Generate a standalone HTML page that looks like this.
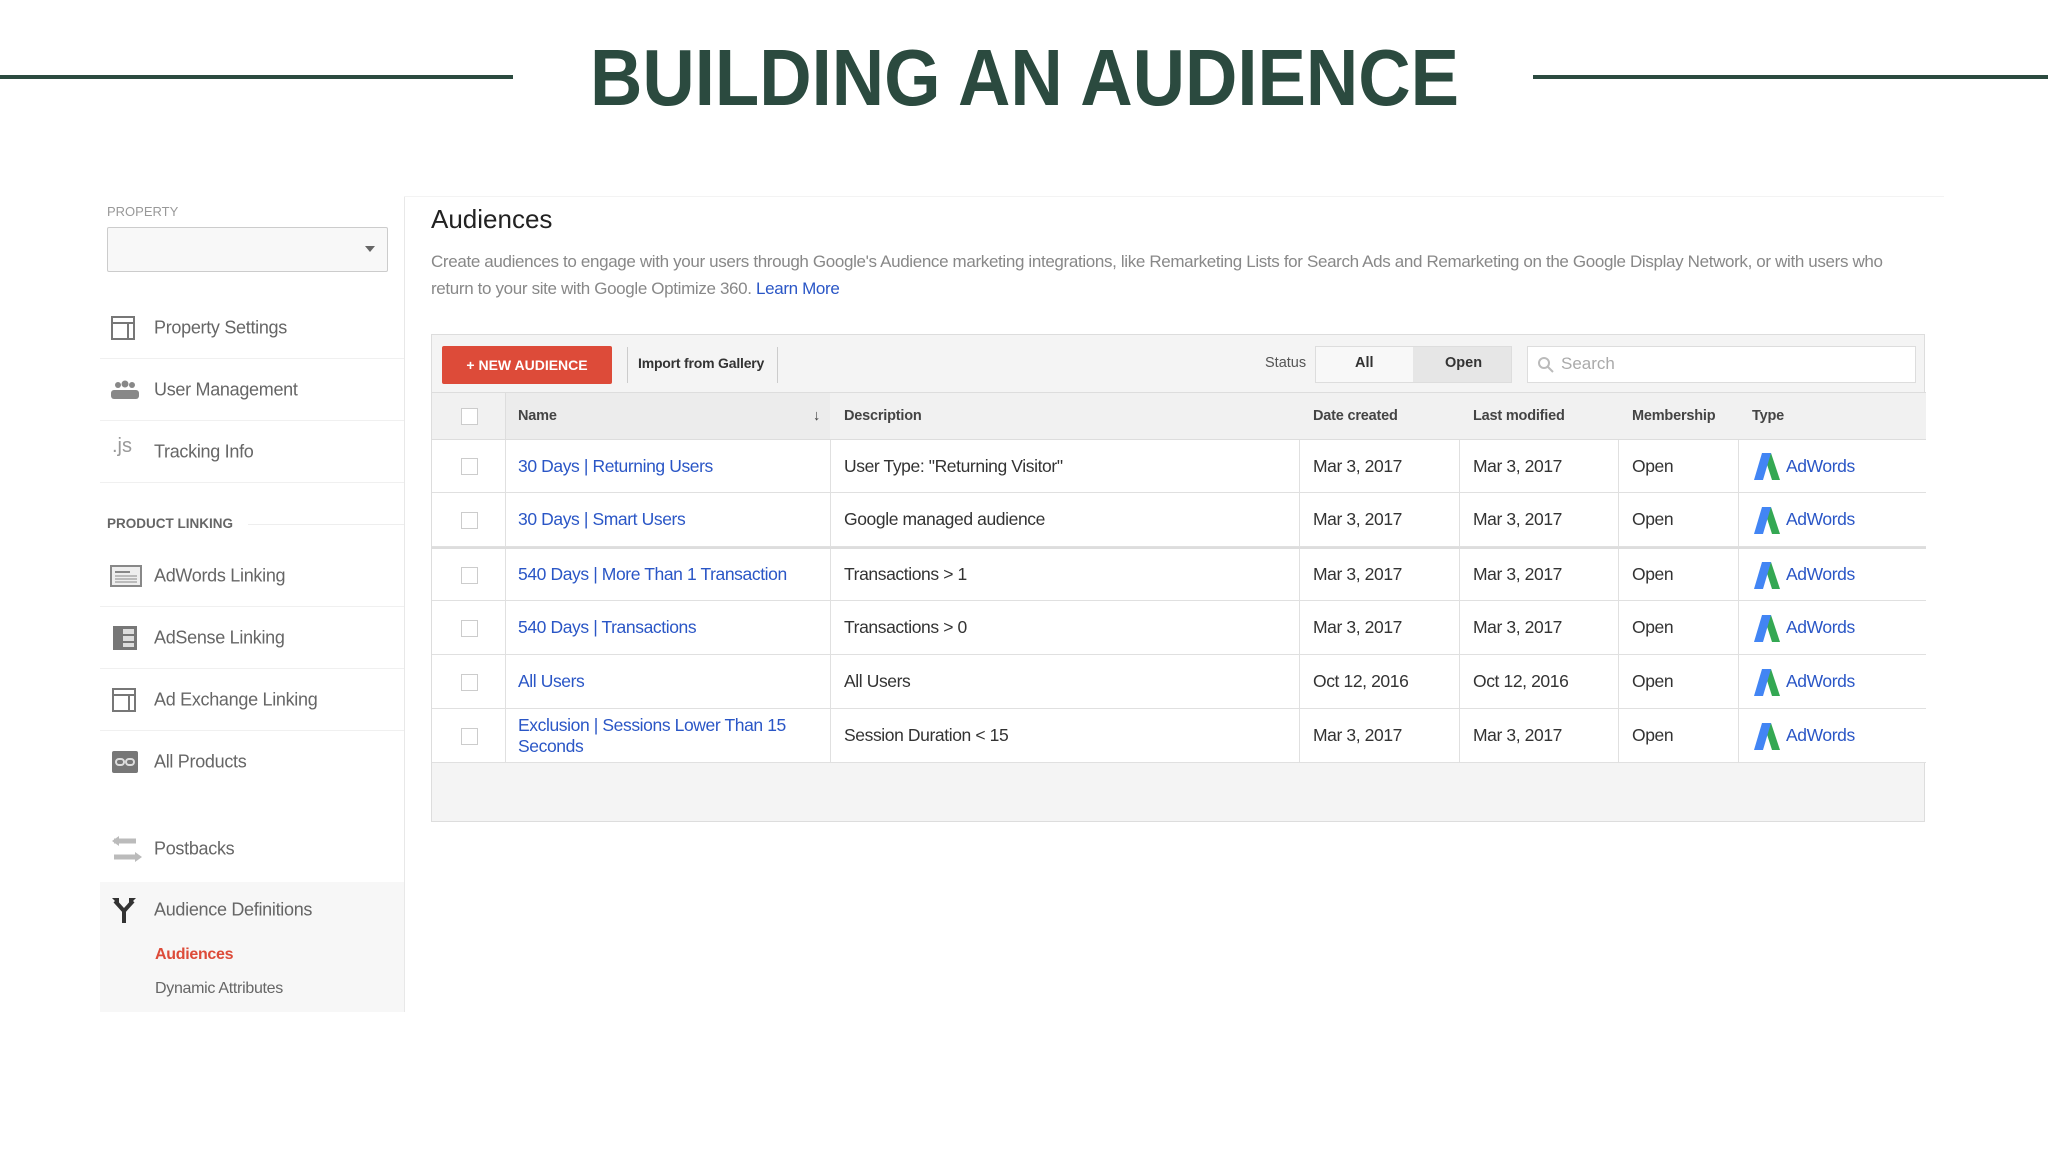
<!DOCTYPE html>
<html><head><meta charset="utf-8"><style>
*{margin:0;padding:0;box-sizing:border-box}
body{width:2048px;height:1152px;background:#fff;position:relative;overflow:hidden;font-family:"Liberation Sans",Arial,sans-serif}
.a{position:absolute}
.line{position:absolute;top:75px;height:4px;background:#2b4a3f}
.side{position:absolute;left:100px;width:304px;top:196px;height:816px}
.mi{position:absolute;left:0;width:304px;height:62px;border-bottom:1px solid #f0f0f0}
.mi .t{position:absolute;left:54px;top:50%;transform:translateY(-50%);font-size:18px;letter-spacing:-0.3px;color:#666;white-space:nowrap}
.mi svg{position:absolute;left:10px;top:50%;transform:translateY(-50%)}
.hd{font-size:14.5px;font-weight:bold;color:#444;position:absolute;top:0;height:100%;display:flex;align-items:center;letter-spacing:-0.2px}
.cell{position:absolute;font-size:17.5px;letter-spacing:-0.4px;color:#333;display:flex;align-items:center;height:100%;top:0;white-space:nowrap}
.lnk{color:#2a56c6}
.row{position:absolute;left:0;width:1494px;border-bottom:1px solid #e0e0e0;background:#fff}
.vl{position:absolute;top:0;height:100%;width:1px;background:#e0e0e0}
.cb{position:absolute;left:29px;width:17px;height:17px;border:1px solid #ccc;background:#fff;top:50%;margin-top:-8px}
</style></head><body>
<div class="line" style="left:0;width:513px"></div>
<div class="line" style="left:1533px;width:515px"></div>
<svg class="a" style="left:580px;top:30px" width="890" height="90"><text x="10" y="75" font-family="Liberation Sans Narrow, Liberation Sans, sans-serif" font-weight="bold" font-size="80" fill="#2b4a3f" textLength="869" lengthAdjust="spacingAndGlyphs">BUILDING AN AUDIENCE</text></svg>

<div class="side">
 <div class="a" style="left:7px;top:8px;font-size:13px;color:#999">PROPERTY</div>
 <div class="a" style="left:7px;top:31px;width:281px;height:45px;border:1px solid #ccc;border-radius:2px;background:#f8f8f8"></div>
 <div class="a" style="left:265px;top:50px;border-left:5px solid transparent;border-right:5px solid transparent;border-top:6px solid #666"></div>
 <div class="mi" style="top:101px"><svg width="26" height="26"><rect x="2" y="2" width="22" height="22" fill="none" stroke="#777" stroke-width="2"/><line x1="2" y1="8" x2="24" y2="8" stroke="#777" stroke-width="2"/><line x1="18" y1="8" x2="18" y2="24" stroke="#777" stroke-width="2"/></svg><span class="t">Property Settings</span></div>
 <div class="mi" style="top:163px"><svg width="30" height="20"><circle cx="8" cy="5" r="3" fill="#888"/><circle cx="15" cy="4" r="3.5" fill="#888"/><circle cx="22" cy="5" r="3" fill="#888"/><rect x="1" y="10" width="28" height="9" rx="3" fill="#888"/></svg><span class="t">User Management</span></div>
 <div class="mi" style="top:225px"><span class="a" style="left:12px;top:14px;font-size:20px;color:#999">.js</span><span class="t">Tracking Info</span></div>
 <div class="a" style="left:7px;top:320px;font-size:13.5px;font-weight:bold;color:#666">PRODUCT LINKING</div>
 <div class="a" style="left:148px;top:328px;width:156px;height:1px;background:#eee"></div>
 <div class="mi" style="top:349px"><svg width="32" height="22"><rect x="1" y="1" width="30" height="20" fill="#eee" stroke="#888" stroke-width="2"/><line x1="5" y1="7" x2="20" y2="7" stroke="#888" stroke-width="2"/><line x1="5" y1="11" x2="27" y2="11" stroke="#888"/><line x1="5" y1="14" x2="27" y2="14" stroke="#888"/><line x1="5" y1="17" x2="27" y2="17" stroke="#888"/></svg><span class="t">AdWords Linking</span></div>
 <div class="mi" style="top:411px"><svg width="28" height="26"><rect x="3" y="1" width="24" height="24" fill="#777"/><rect x="13" y="4" width="11" height="5" fill="#ddd"/><rect x="13" y="11" width="11" height="5" fill="#ddd"/><rect x="13" y="18" width="11" height="4" fill="#ddd"/></svg><span class="t">AdSense Linking</span></div>
 <div class="mi" style="top:473px"><svg width="28" height="26"><rect x="3" y="2" width="22" height="22" fill="none" stroke="#777" stroke-width="2"/><line x1="3" y1="8" x2="25" y2="8" stroke="#777" stroke-width="2"/><line x1="19" y1="8" x2="19" y2="24" stroke="#777" stroke-width="2"/></svg><span class="t">Ad Exchange Linking</span></div>
 <div class="mi" style="top:535px;border:none"><svg width="30" height="24"><rect x="2" y="1" width="26" height="22" rx="2" fill="#777"/><rect x="6" y="9" width="8" height="6" rx="3" fill="none" stroke="#ddd" stroke-width="2"/><rect x="16" y="9" width="8" height="6" rx="3" fill="none" stroke="#ddd" stroke-width="2"/></svg><span class="t">All Products</span></div>
 <div class="mi" style="top:622px;border:none"><svg width="34" height="32"><path d="M4 8 H26 M4 24 H26" stroke="#bbb" stroke-width="5"/><path d="M2 8 l7 -5 v10z M32 24 l-7 -5 v10z" fill="#bbb"/></svg><span class="t">Postbacks</span></div>
 <div class="a" style="left:0;top:686px;width:304px;height:130px;background:#f7f7f7"></div>
 <div class="mi" style="top:683px;border:none"><svg width="28" height="28"><path d="M14 27 V15 L5 5 M14 15 L23 5" stroke="#333" stroke-width="4" fill="none"/><path d="M2 2 h7 v7z M26 2 h-7 v7z" fill="#333"/></svg><span class="t">Audience Definitions</span></div>
 <div class="a" style="left:55px;top:750px;font-size:16px;font-weight:bold;color:#dd4b39;letter-spacing:-0.3px">Audiences</div>
 <div class="a" style="left:55px;top:784px;font-size:16px;color:#666;letter-spacing:-0.3px">Dynamic Attributes</div>
</div>
<div class="a" style="left:404px;top:196px;width:1px;height:816px;background:#e8e8e8"></div>
<div class="a" style="left:404px;top:196px;width:1540px;height:1px;background:#f3f3f3"></div>

<div class="a" style="left:431px;top:204px;font-size:26px;color:#222">Audiences</div>
<div class="a" style="left:431px;top:248px;width:1486px;font-size:17px;letter-spacing:-0.35px;line-height:27px;color:#888">Create audiences to engage with your users through Google's Audience marketing integrations, like Remarketing Lists for Search Ads and Remarketing on the Google Display Network, or with users who return to your site with Google Optimize 360. <span class="lnk">Learn More</span></div>

<div class="a" style="left:431px;top:334px;width:1494px;height:488px;border:1px solid #ddd;background:#f4f4f4">
 <div class="a" style="left:10px;top:11px;width:170px;height:38px;background:#dd4b39;border-radius:2px;color:#fff;font-size:14px;font-weight:bold;display:flex;align-items:center;justify-content:center">+ NEW AUDIENCE</div>
 <div class="a" style="left:195px;top:12px;width:1px;height:36px;background:#ccc"></div>
 <div class="a" style="left:206px;top:20px;font-size:14px;letter-spacing:-0.2px;font-weight:bold;color:#333">Import from Gallery</div>
 <div class="a" style="left:345px;top:12px;width:1px;height:36px;background:#ccc"></div>
 <div class="a" style="left:833px;top:20px;font-size:14.5px;color:#555">Status</div>
 <div class="a" style="left:883px;top:11px;width:197px;height:37px;border:1px solid #ddd;background:#f8f8f8"></div>
 <div class="a" style="left:981px;top:12px;width:98px;height:35px;background:#e6e6e6"></div>
 <div class="a" style="left:923px;top:20px;font-size:14.5px;font-weight:bold;color:#333">All</div>
 <div class="a" style="left:1013px;top:20px;font-size:14.5px;font-weight:bold;color:#333">Open</div>
 <div class="a" style="left:1095px;top:11px;width:389px;height:37px;border:1px solid #ddd;background:#fff"></div>
 <svg class="a" style="left:1105px;top:21px" width="18" height="18"><circle cx="7" cy="7" r="5" fill="none" stroke="#bbb" stroke-width="2"/><line x1="11" y1="11" x2="16" y2="16" stroke="#bbb" stroke-width="2"/></svg>
 <div class="a" style="left:1129px;top:19px;font-size:17px;color:#aaa">Search</div>

 <div class="a" style="left:0;top:57px;width:1494px;height:48px;background:#f1f1f1;border-top:1px solid #ddd;border-bottom:1px solid #ddd">
  <div class="cb" style="background:#fff"></div>
  <div class="a" style="left:73px;top:0;width:325px;height:100%;background:#ececec;border-left:1px solid #ddd"></div>
  <div class="hd" style="left:86px">Name</div><div class="hd" style="left:381px">↓</div>
  <div class="hd" style="left:412px">Description</div>
  <div class="hd" style="left:881px">Date created</div>
  <div class="hd" style="left:1041px">Last modified</div>
  <div class="hd" style="left:1200px">Membership</div>
  <div class="hd" style="left:1320px">Type</div>
 </div>
 <div class="a" style="left:0;top:105px;width:1494px">
  <div class="row" style="top:0;height:53px"><div class="cb"></div><div class="vl" style="left:73px"></div><div class="vl" style="left:398px"></div><div class="vl" style="left:867px"></div><div class="vl" style="left:1027px"></div><div class="vl" style="left:1186px"></div><div class="vl" style="left:1306px"></div>
   <div class="cell lnk" style="left:86px">30 Days | Returning Users</div><div class="cell" style="left:412px">User Type: "Returning Visitor"</div><div class="cell" style="left:881px">Mar 3, 2017</div><div class="cell" style="left:1041px">Mar 3, 2017</div><div class="cell" style="left:1200px">Open</div><div class="cell lnk" style="left:1320px"><svg width="30" height="30" style="margin-right:4px"><path d="M19 2 L28 29 H20 L12 4z" fill="#34a853"/><path d="M10 2 H19 L11 29 H2z" fill="#4285f4"/></svg>AdWords</div></div>
  <div class="row" style="top:53px;height:54px"><div class="cb"></div><div class="vl" style="left:73px"></div><div class="vl" style="left:398px"></div><div class="vl" style="left:867px"></div><div class="vl" style="left:1027px"></div><div class="vl" style="left:1186px"></div><div class="vl" style="left:1306px"></div>
   <div class="cell lnk" style="left:86px">30 Days | Smart Users</div><div class="cell" style="left:412px">Google managed audience</div><div class="cell" style="left:881px">Mar 3, 2017</div><div class="cell" style="left:1041px">Mar 3, 2017</div><div class="cell" style="left:1200px">Open</div><div class="cell lnk" style="left:1320px"><svg width="30" height="30" style="margin-right:4px"><path d="M19 2 L28 29 H20 L12 4z" fill="#34a853"/><path d="M10 2 H19 L11 29 H2z" fill="#4285f4"/></svg>AdWords</div></div>
  <div class="row" style="top:107px;height:54px;border-top:2px solid #ddd"><div class="cb"></div><div class="vl" style="left:73px"></div><div class="vl" style="left:398px"></div><div class="vl" style="left:867px"></div><div class="vl" style="left:1027px"></div><div class="vl" style="left:1186px"></div><div class="vl" style="left:1306px"></div>
   <div class="cell lnk" style="left:86px">540 Days | More Than 1 Transaction</div><div class="cell" style="left:412px">Transactions &gt; 1</div><div class="cell" style="left:881px">Mar 3, 2017</div><div class="cell" style="left:1041px">Mar 3, 2017</div><div class="cell" style="left:1200px">Open</div><div class="cell lnk" style="left:1320px"><svg width="30" height="30" style="margin-right:4px"><path d="M19 2 L28 29 H20 L12 4z" fill="#34a853"/><path d="M10 2 H19 L11 29 H2z" fill="#4285f4"/></svg>AdWords</div></div>
  <div class="row" style="top:161px;height:54px"><div class="cb"></div><div class="vl" style="left:73px"></div><div class="vl" style="left:398px"></div><div class="vl" style="left:867px"></div><div class="vl" style="left:1027px"></div><div class="vl" style="left:1186px"></div><div class="vl" style="left:1306px"></div>
   <div class="cell lnk" style="left:86px">540 Days | Transactions</div><div class="cell" style="left:412px">Transactions &gt; 0</div><div class="cell" style="left:881px">Mar 3, 2017</div><div class="cell" style="left:1041px">Mar 3, 2017</div><div class="cell" style="left:1200px">Open</div><div class="cell lnk" style="left:1320px"><svg width="30" height="30" style="margin-right:4px"><path d="M19 2 L28 29 H20 L12 4z" fill="#34a853"/><path d="M10 2 H19 L11 29 H2z" fill="#4285f4"/></svg>AdWords</div></div>
  <div class="row" style="top:215px;height:54px"><div class="cb"></div><div class="vl" style="left:73px"></div><div class="vl" style="left:398px"></div><div class="vl" style="left:867px"></div><div class="vl" style="left:1027px"></div><div class="vl" style="left:1186px"></div><div class="vl" style="left:1306px"></div>
   <div class="cell lnk" style="left:86px">All Users</div><div class="cell" style="left:412px">All Users</div><div class="cell" style="left:881px">Oct 12, 2016</div><div class="cell" style="left:1041px">Oct 12, 2016</div><div class="cell" style="left:1200px">Open</div><div class="cell lnk" style="left:1320px"><svg width="30" height="30" style="margin-right:4px"><path d="M19 2 L28 29 H20 L12 4z" fill="#34a853"/><path d="M10 2 H19 L11 29 H2z" fill="#4285f4"/></svg>AdWords</div></div>
  <div class="row" style="top:269px;height:54px"><div class="cb"></div><div class="vl" style="left:73px"></div><div class="vl" style="left:398px"></div><div class="vl" style="left:867px"></div><div class="vl" style="left:1027px"></div><div class="vl" style="left:1186px"></div><div class="vl" style="left:1306px"></div>
   <div class="cell lnk" style="left:86px;white-space:normal;line-height:21px;width:300px">Exclusion | Sessions Lower Than 15 Seconds</div><div class="cell" style="left:412px">Session Duration &lt; 15</div><div class="cell" style="left:881px">Mar 3, 2017</div><div class="cell" style="left:1041px">Mar 3, 2017</div><div class="cell" style="left:1200px">Open</div><div class="cell lnk" style="left:1320px"><svg width="30" height="30" style="margin-right:4px"><path d="M19 2 L28 29 H20 L12 4z" fill="#34a853"/><path d="M10 2 H19 L11 29 H2z" fill="#4285f4"/></svg>AdWords</div></div>
 </div>
</div>
</body></html>
